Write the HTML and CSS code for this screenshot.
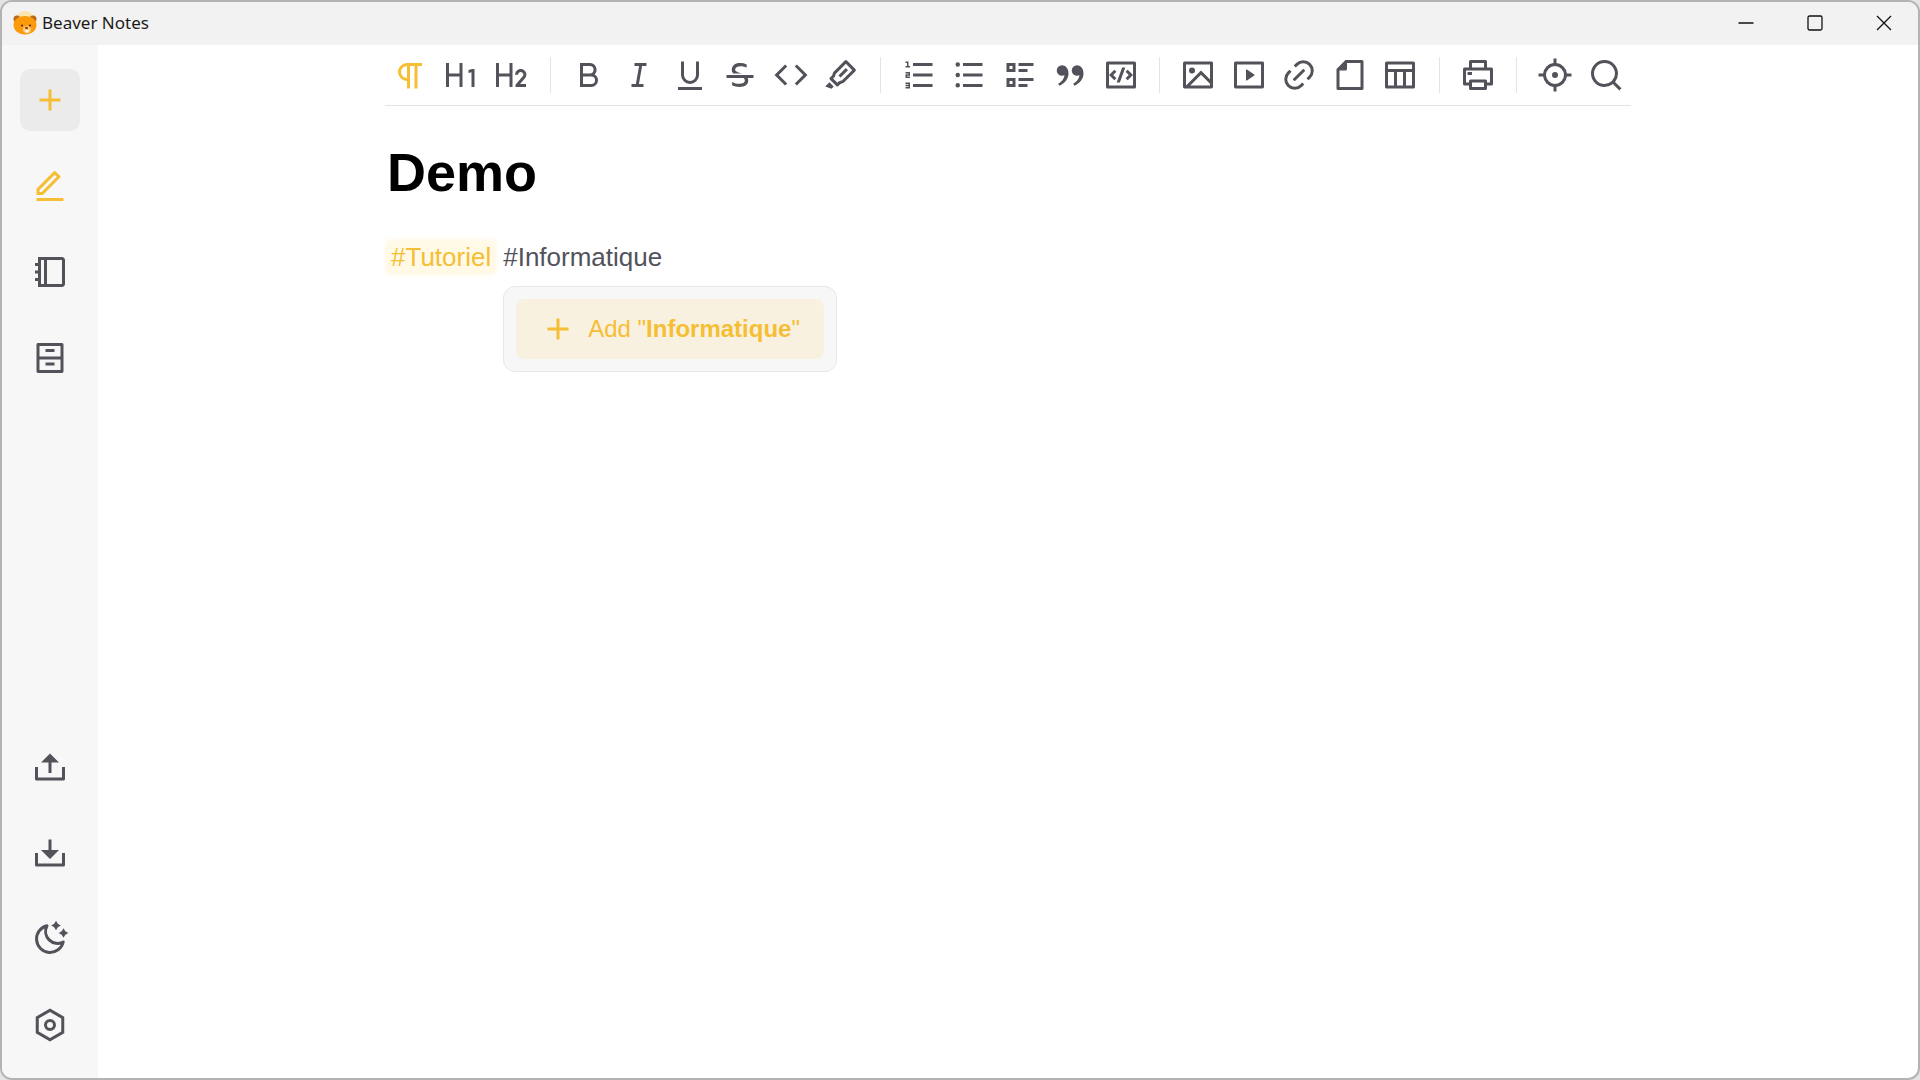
FILE: index.html
```html
<!DOCTYPE html>
<html lang="en">
<head>
<meta charset="utf-8">
<title>Beaver Notes</title>
<link rel="stylesheet" href="styles.css">
</head>
<body>
<div class="window">
  <header class="titlebar">
    <svg class="logo" viewBox="0 0 24 24" aria-hidden="true">
      <circle cx="12" cy="10" r="10" fill="#fbe3ae"/>
      <circle cx="4" cy="8" r="3.500" fill="#b86a1c"/>
      <circle cx="20" cy="8" r="3.500" fill="#b86a1c"/>
      <path d="M12 5c7 0 11.500 4 11.500 9S19 23.500 12 23.500 .5 19 .5 14 5 5 12 5z" fill="#fb9a0b"/>
      <ellipse cx="14" cy="18.500" rx="4" ry="3.500" fill="#ffc978"/>
      <circle cx="9" cy="14.500" r="1.100" fill="#5a2d0c"/>
      <circle cx="17" cy="14.500" r="1.100" fill="#5a2d0c"/>
      <ellipse cx="13.500" cy="17" rx="1.600" ry="1.100" fill="#7a2c10"/>
      <path d="M12.500 19h3v2.500h-3z" fill="#fff"/>
    </svg>
    <span class="app-name">Beaver Notes</span>
    <div class="window-controls">
      <button type="button" aria-label="Minimize"><svg viewBox="0 0 16 16"><path d="M0.500 8h15"/></svg></button>
      <button type="button" aria-label="Maximize"><svg viewBox="0 0 16 16"><rect x="1" y="1" width="14" height="14" rx="1.500"/></svg></button>
      <button type="button" aria-label="Close"><svg viewBox="0 0 16 16"><path d="M1 1l14 14M15 1L1 15"/></svg></button>
    </div>
  </header>
  <div class="body">
    <nav class="sidebar" aria-label="Main">
      <button type="button" class="side-btn add" aria-label="New note"><svg class="icon" viewBox="0 0 24 24"><path d="M11 11V5h2v6h6v2h-6v6h-2v-6H5v-2z"/></svg></button>
      <button type="button" class="side-btn active" aria-label="Editor"><svg class="icon" viewBox="0 0 24 24"><path d="M6.414 16L16.556 5.858l-1.414-1.414L5 14.586V16h1.414zm.829 2H3v-4.243L14.435 2.322a1 1 0 0 1 1.414 0l2.829 2.829a1 1 0 0 1 0 1.414L7.243 18zM3 20h18v2H3v-2z"/></svg></button>
      <button type="button" class="side-btn" aria-label="Notes"><svg class="icon" viewBox="0 0 24 24"><path d="M20.005 2C21.107 2 22 2.898 22 3.990v16.020c0 1.099-.893 1.990-1.995 1.990H4v-4H2v-2h2v-3H2v-2h2V8H2V6h2V2h16.005zM8 4H6v16h2V4zm12 0H10v16h10V4z"/></svg></button>
      <button type="button" class="side-btn" aria-label="Archive"><svg class="icon" viewBox="0 0 24 24"><path d="M3 2.992C3 2.444 3.445 2 3.993 2h16.014a1 1 0 0 1 .993.992v18.016a.993.993 0 0 1-.993.992H3.993A1 1 0 0 1 3 21.008V2.992zM19 11V4H5v7h14zm0 2H5v7h14v-7zM9 6h6v2H9V6zm0 9h6v2H9v-2z"/></svg></button>
      <div class="side-spacer"></div>
      <button type="button" class="side-btn" aria-label="Export"><svg class="icon" viewBox="0 0 24 24"><path d="M4 19h16v-7h2v8a1 1 0 0 1-1 1H3a1 1 0 0 1-1-1v-8h2v7zM13 9v7h-2V9H6l6-6 6 6h-5z"/></svg></button>
      <button type="button" class="side-btn" aria-label="Import"><svg class="icon" viewBox="0 0 24 24"><path d="M13 10h5l-6 6-6-6h5V3h2v7zm-9 9h16v-7h2v8a1 1 0 0 1-1 1H3a1 1 0 0 1-1-1v-8h2v7z"/></svg></button>
      <button type="button" class="side-btn" aria-label="Dark theme"><svg class="icon" viewBox="0 0 24 24"><path d="M10 3.200A9 9 0 1 0 20.800 14 8 8 0 0 1 10 3.200z" fill="none" stroke="currentColor" stroke-width="2" stroke-linejoin="round"/><path d="M16-.2l1.200 2 2 1.200-2 1.200-1.200 2-1.200-2-2-1.200 2-1.200zM21 4.800l1.200 2 2 1.200-2 1.200-1.200 2-1.200-2-2-1.200 2-1.200z"/></svg></button>
      <button type="button" class="side-btn" aria-label="Settings"><svg class="icon" viewBox="0 0 24 24"><path d="M12 1l9.500 5.500v11L12 23l-9.500-5.500v-11L12 1zm0 2.311L4.500 7.653v8.694l7.500 4.342 7.500-4.342V7.653L12 3.311zM12 16a4 4 0 1 1 0-8 4 4 0 0 1 0 8zm0-2a2 2 0 1 0 0-4 2 2 0 0 0 0 4z"/></svg></button>
    </nav>
    <main class="editor">
      <div class="toolbar" role="toolbar" aria-label="Formatting">
        <button type="button" class="active" aria-label="Paragraph"><svg class="icon" viewBox="0 0 24 24"><path d="M12 6v15h-2v-5a6 6 0 1 1 0-12h10v2h-3v15h-2V6h-3zm-2 0a4 4 0 1 0 0 8V6z"/></svg></button>
        <button type="button" aria-label="Heading 1"><svg class="icon" viewBox="0 0 24 24"><path d="M13 20h-2v-7H4v7H2V4h2v7h7V4h2v16zm8-12v12h-2v-9.796l-2 .536V8.670L19.500 8H21z"/></svg></button>
        <button type="button" aria-label="Heading 2"><svg class="icon" viewBox="0 0 24 24"><path d="M4 4v7h7V4h2v16h-2v-7H4v7H2V4h2zm14.500 4c2.071 0 3.750 1.679 3.750 3.750 0 .857-.288 1.648-.772 2.280l-.148.180L18.034 18H22v2h-7v-1.556l4.820-5.546c.268-.307.430-.709.430-1.148 0-.966-.784-1.750-1.750-1.750-.918 0-1.671.707-1.744 1.606l-.006.144h-2C14.750 9.679 16.429 8 18.500 8z"/></svg></button>
        <span class="divider"></span>
        <button type="button" aria-label="Bold"><svg class="icon" viewBox="0 0 24 24"><path d="M8 11h4.500a2.500 2.500 0 1 0 0-5H8v5zm10 4.500a4.500 4.500 0 0 1-4.500 4.500H6V4h6.500a4.500 4.500 0 0 1 3.256 7.606A4.498 4.498 0 0 1 18 15.500zM8 13v5h5.500a2.500 2.500 0 1 0 0-5H8z"/></svg></button>
        <button type="button" aria-label="Italic"><svg class="icon" viewBox="0 0 24 24"><path d="M15 20H7v-2h2.927l2.116-12H9V4h8v2h-2.927l-2.116 12H15z"/></svg></button>
        <button type="button" aria-label="Underline"><svg class="icon" viewBox="0 0 24 24"><path d="M8 3v9a4 4 0 1 0 8 0V3h2v9a6 6 0 1 1-12 0V3h2zM4 20h16v2H4v-2z"/></svg></button>
        <button type="button" aria-label="Strikethrough"><svg class="icon" viewBox="0 0 24 24"><path d="M17.154 14c.23.516.346 1.090.346 1.720 0 1.342-.524 2.392-1.571 3.147C14.880 19.622 13.433 20 11.586 20c-1.640 0-3.263-.381-4.870-1.144V16.600c1.520.877 3.075 1.316 4.666 1.316 2.551 0 3.830-.732 3.839-2.197a2.210 2.210 0 0 0-.648-1.603l-.12-.117H3v-2h18v2h-3.846zm-4.078-3H7.629a4.086 4.086 0 0 1-.481-.522C6.716 9.920 6.500 9.246 6.500 8.452c0-1.236.466-2.287 1.397-3.153C8.830 4.433 10.271 4 12.222 4c1.471 0 2.879.328 4.222.984v2.152c-1.200-.687-2.515-1.030-3.946-1.030-2.480 0-3.719.782-3.719 2.346 0 .42.218.786.654 1.099.436.313.974.562 1.613.750.620.180 1.297.414 2.030.699z"/></svg></button>
        <button type="button" aria-label="Inline code"><svg class="icon" viewBox="0 0 24 24"><path d="M23 12l-7.071 7.071-1.414-1.414L20.172 12l-5.657-5.657 1.414-1.414L23 12zM3.828 12l5.657 5.657-1.414 1.414L1 12l7.071-7.071 1.414 1.414L3.828 12z"/></svg></button>
        <button type="button" aria-label="Highlight"><svg class="icon" viewBox="0 0 24 24"><path d="M15.243 4.515l-6.738 6.737-.707 2.121-1.040 1.041 2.828 2.829 1.040-1.041 2.122-.707 6.737-6.738-4.242-4.242zm6.364 3.535a1 1 0 0 1 0 1.414l-7.779 7.779-2.120.707-1.415 1.414a1 1 0 0 1-1.414 0l-4.243-4.243a1 1 0 0 1 0-1.414l1.414-1.414.707-2.121 7.779-7.779a1 1 0 0 1 1.414 0l5.657 5.657zm-6.364-.707l1.414 1.414-4.950 4.950-1.414-1.414 4.950-4.950zM4.283 16.890l2.828 2.829-1.414 1.414-4.243-1.414 2.828-2.829z"/></svg></button>
        <span class="divider"></span>
        <button type="button" aria-label="Ordered list"><svg class="icon" viewBox="0 0 24 24"><path d="M8 4h13v2H8V4zM5 3v3h1v1H3V6h1V4H3V3h2zM3 14v-2.500h2V11H3v-1h3v2.500H4v.5h2v1H3zm2 5.500H3v-1h2V18H3v-1h3v4H3v-1h2v-.5zM8 11h13v2H8v-2zm0 7h13v2H8v-2z"/></svg></button>
        <button type="button" aria-label="Bullet list"><svg class="icon" viewBox="0 0 24 24"><path d="M8 4h13v2H8V4zM4.500 6.500a1.500 1.500 0 1 1 0-3 1.500 1.500 0 0 1 0 3zm0 7a1.500 1.500 0 1 1 0-3 1.500 1.500 0 0 1 0 3zm0 6.900a1.500 1.500 0 1 1 0-3 1.500 1.500 0 0 1 0 3zM8 11h13v2H8v-2zm0 7h13v2H8v-2z"/></svg></button>
        <button type="button" aria-label="Check list"><svg class="icon" viewBox="0 0 24 24"><path d="M11 4h10v2H11V4zm0 4h6v2h-6V8zm0 6h10v2H11v-2zm0 4h6v2h-6v-2zM3 4h6v6H3V4zm2 2v2h2V6H5zm-2 8h6v6H3v-6zm2 2v2h2v-2H5z"/></svg></button>
        <button type="button" aria-label="Quote"><svg class="icon" viewBox="0 0 24 24"><path d="M19.417 6.679C20.447 7.773 21 9 21 10.989c0 3.500-2.457 6.637-6.030 8.188l-.893-1.378c3.335-1.804 3.987-4.145 4.247-5.621-.537.278-1.240.375-1.929.311-1.804-.167-3.226-1.648-3.226-3.489a3.500 3.500 0 0 1 3.500-3.500c1.073 0 2.099.490 2.748 1.179zm-10 0C10.447 7.773 11 9 11 10.989c0 3.500-2.457 6.637-6.030 8.188l-.893-1.378c3.335-1.804 3.987-4.145 4.247-5.621-.537.278-1.240.375-1.929.311C4.591 12.322 3.170 10.841 3.170 9a3.500 3.500 0 0 1 3.500-3.500c1.073 0 2.099.490 2.748 1.179z"/></svg></button>
        <button type="button" aria-label="Code block"><svg class="icon" viewBox="0 0 24 24"><path d="M3 3h18a1 1 0 0 1 1 1v16a1 1 0 0 1-1 1H3a1 1 0 0 1-1-1V4a1 1 0 0 1 1-1zm1 2v14h16V5H4zm16 7l-3.536 3.536-1.414-1.415L17.172 12 15.050 9.879l1.414-1.415L20 12zM6.828 12l2.122 2.121-1.414 1.415L4 12l3.536-3.536L8.950 9.880 6.828 12zm4.416 5H9.116l3.640-10h2.128l-3.640 10z"/></svg></button>
        <span class="divider"></span>
        <button type="button" aria-label="Image"><svg class="icon" viewBox="0 0 24 24"><path d="M4.828 21l-.02.02-.021-.02H2.992A.993.993 0 0 1 2 20.007V3.993A1 1 0 0 1 2.992 3h18.016c.548 0 .992.445.992.993v16.014a1 1 0 0 1-.992.993H4.828zM20 15V5H4v14L14 9l6 6zm0 2.828l-6-6L6.828 19H20v-1.172zM8 11a2 2 0 1 1 0-4 2 2 0 0 1 0 4z"/></svg></button>
        <button type="button" aria-label="Video"><svg class="icon" viewBox="0 0 24 24"><path d="M2 3.993A1 1 0 0 1 2.992 3h18.016c.548 0 .992.445.992.993v16.014a1 1 0 0 1-.992.993H2.992A.993.993 0 0 1 2 20.007V3.993zM4 5v14h16V5H4zm6.622 3.415l4.879 3.252a.4.4 0 0 1 0 .666l-4.880 3.252a.4.4 0 0 1-.621-.332V8.747a.4.4 0 0 1 .622-.332z"/></svg></button>
        <button type="button" aria-label="Link"><svg class="icon" viewBox="0 0 24 24"><path d="M18.364 15.536L16.950 14.120l1.414-1.414a5 5 0 1 0-7.071-7.071L9.879 7.050 8.464 5.636 9.880 4.222a7 7 0 0 1 9.900 9.900l-1.415 1.414zm-2.828 2.828l-1.415 1.414a7 7 0 0 1-9.900-9.900l1.415-1.414L7.050 9.880l-1.414 1.414a5 5 0 1 0 7.071 7.071l1.414-1.414 1.415 1.414zm-.708-10.607l1.415 1.415-7.071 7.070-1.415-1.414 7.071-7.070z"/></svg></button>
        <button type="button" aria-label="File"><svg class="icon" viewBox="0 0 24 24"><path fill-rule="evenodd" d="M9 2h11a1 1 0 0 1 1 1v18a1 1 0 0 1-1 1H4a1 1 0 0 1-1-1V8zM10 4v4a1 1 0 0 1-1 1H5v11h14V4z"/></svg></button>
        <button type="button" aria-label="Table"><svg class="icon" viewBox="0 0 24 24"><path fill-rule="evenodd" d="M3 3h18a1 1 0 0 1 1 1v16a1 1 0 0 1-1 1H3a1 1 0 0 1-1-1V4a1 1 0 0 1 1-1zM4 5v3h16V5H4zM4 10v9h4v-9H4zm6 0v9h4v-9h-4zm6 0v9h4v-9h-4z"/></svg></button>
        <span class="divider"></span>
        <button type="button" aria-label="Print"><svg class="icon" viewBox="0 0 24 24"><path d="M6 19H3a1 1 0 0 1-1-1V8a1 1 0 0 1 1-1h3V3a1 1 0 0 1 1-1h10a1 1 0 0 1 1 1v4h3a1 1 0 0 1 1 1v10a1 1 0 0 1-1 1h-3v2a1 1 0 0 1-1 1H7a1 1 0 0 1-1-1v-2zm0-2v-1a1 1 0 0 1 1-1h10a1 1 0 0 1 1 1v1h2V9H4v8h2zM8 4v3h8V4H8zm0 13v3h8v-3H8zm-3-7h3v2H5v-2z"/></svg></button>
        <span class="divider"></span>
        <button type="button" aria-label="Focus mode"><svg class="icon" viewBox="0 0 24 24"><path d="M13 1l.001 3.062A8.004 8.004 0 0 1 19.938 11H23v2l-3.062.001a8.004 8.004 0 0 1-6.937 6.937L13 23h-2v-3.062a8.004 8.004 0 0 1-6.938-6.937L1 13v-2h3.062A8.004 8.004 0 0 1 11 4.062V1h2zm-1 5a6 6 0 1 0 0 12 6 6 0 0 0 0-12zm0 4a2 2 0 1 1 0 4 2 2 0 0 1 0-4z"/></svg></button>
        <button type="button" aria-label="Search"><svg class="icon" viewBox="0 0 24 24"><path d="M18.031 16.617l4.283 4.282-1.415 1.415-4.282-4.283A8.960 8.960 0 0 1 11 20c-4.968 0-9-4.032-9-9s4.032-9 9-9 9 4.032 9 9a8.960 8.960 0 0 1-1.969 5.617zm-2.006-.742A6.977 6.977 0 0 0 18 11c0-3.868-3.133-7-7-7-3.868 0-7 3.132-7 7 0 3.867 3.132 7 7 7a6.977 6.977 0 0 0 4.875-1.975l.15-.15z"/></svg></button>
      </div>
      <article class="note">
        <h1 class="note-title">Demo</h1>
        <p class="tags">
          <span class="tag">#Tutoriel</span>
          <span class="tag-draft">#Informatique
            <span class="suggestions">
              <button type="button" class="suggestion"><svg class="icon" viewBox="0 0 24 24"><path d="M11 11V5h2v6h6v2h-6v6h-2v-6H5v-2z"/></svg><span>Add "<b>Informatique</b>"</span></button>
            </span>
          </span>
        </p>
      </article>
    </main>
  </div>
</div>
</body>
</html>
```

FILE: styles.css
```css
* {
  box-sizing: border-box;
}

body {
  margin: 0;
  background: #e4e4e4;
  color: #52525b;
  font-family: "Liberation Sans", Arial, sans-serif;
}

button {
  display: flex;
  align-items: center;
  justify-content: center;
  padding: 0;
  border: 0;
  background: none;
  color: inherit;
  font: inherit;
  cursor: pointer;
}

.icon {
  flex: none;
  width: 36px;
  height: 36px;
  fill: currentColor;
  overflow: visible;
}

.window {
  display: flex;
  flex-direction: column;
  min-height: 100vh;
  overflow: hidden;
  border: 2px solid #b3b3b3;
  border-radius: 12px;
  background: #fff;
}

/* Title bar */

.titlebar {
  display: flex;
  align-items: stretch;
  height: 43px;
  padding: 0 0 2px 11px;
  background: #f2f2f2;
  color: #1b1b1b;
}

.logo {
  align-self: center;
  width: 24px;
  height: 24px;
  margin-right: 5px;
}

.app-name {
  align-self: center;
  font: 17px/24px "Noto Sans", "Open Sans", sans-serif;
}

.window-controls {
  display: flex;
  margin-left: auto;
}

.window-controls button {
  width: 69px;
}

.window-controls svg {
  width: 16px;
  height: 16px;
  fill: none;
  stroke: #111;
  stroke-width: 1.3;
}

/* Layout */

.body {
  display: flex;
  flex: 1;
}

.sidebar {
  display: flex;
  flex-direction: column;
  align-items: center;
  gap: 24px;
  width: 96px;
  padding: 24px 0 22px;
  background: #f7f7f8;
}

.side-btn {
  width: 60px;
  height: 62px;
  border-radius: 10px;
}

.side-btn.add {
  background: #ebebeb;
}

.side-btn.add,
.active {
  color: #f5be34;
}

.side-spacer {
  flex: 1;
}

.editor {
  flex: 1;
  min-width: 0;
}

/* Toolbar */

.toolbar {
  display: flex;
  align-items: center;
  height: 61px;
  max-width: 1246px;
  margin: 0 auto;
  border-bottom: 1px solid #e4e4e7;
}

.toolbar button {
  flex: 1;
  height: 50px;
}

.divider {
  width: 1px;
  height: 36px;
  margin: 0 13px;
  background: #e4e4e7;
}

/* Note */

.note {
  max-width: 1246px;
  margin: 0 auto;
  padding: 34px 2px;
}

.note-title {
  margin: 0 0 37px;
  color: #000;
  font-size: 54px;
  line-height: 64px;
}

.tags {
  display: flex;
  gap: 8px;
  margin: 0;
  font-size: 26px;
  line-height: 32px;
}

.tag {
  padding: 0 4px;
  border-radius: 4px;
  background: #fff9e6;
  box-shadow: 0 0 4px 2px #fff9e6;
  color: #f5be34;
}

.tag-draft {
  position: relative;
}

.suggestions {
  position: absolute;
  top: 100%;
  left: 0;
  padding: 12px;
  margin-top: 13px;
  border: 1px solid #e8e8ea;
  border-radius: 12px;
  background: #f7f7f7;
}

.suggestion {
  gap: 12px;
  height: 60px;
  padding: 0 24px;
  border-radius: 8px;
  background: #f9f1df;
  color: #f5be34;
  font-size: 24px;
  white-space: nowrap;
}
```
